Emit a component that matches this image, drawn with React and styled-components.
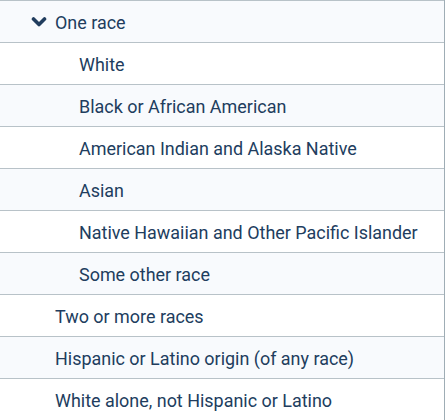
import React from 'react';
import styled, { createGlobalStyle } from 'styled-components';

const GlobalStyle = createGlobalStyle`
  body {
    margin: 0;
    background: #ffffff;
    font-family: Roboto, "Liberation Sans", sans-serif;
  }
`;

const List = styled.div`
  width: 445px;
  box-sizing: border-box;
  border-right: 1px solid #9fadb5;
`;

const Row = styled.div`
  display: flex;
  align-items: center;
  height: 42px;
  box-sizing: border-box;
  border-top: 1px solid #b8c2c8;
  padding-top: 1px;
  background: ${(p) => (p.$shade ? '#f8fafd' : '#ffffff')};
  padding-left: ${(p) => p.$indent}px;
  color: #213d5e;
  font-size: 17.95px;
  white-space: nowrap;
`;

const Chevron = styled.svg`
  width: 16px;
  height: 12px;
  margin-right: 8px;
  margin-left: -24px;
  margin-top: -1px;
`;

const rows = [
  { label: 'One race', indent: 55, open: true },
  { label: 'White', indent: 79 },
  { label: 'Black or African American', indent: 79 },
  { label: 'American Indian and Alaska Native', indent: 79 },
  { label: 'Asian', indent: 79 },
  { label: 'Native Hawaiian and Other Pacific Islander', indent: 79 },
  { label: 'Some other race', indent: 79 },
  { label: 'Two or more races', indent: 55 },
  { label: 'Hispanic or Latino origin (of any race)', indent: 55 },
  { label: 'White alone, not Hispanic or Latino', indent: 55 },
];

export default function App() {
  return (
    <>
      <GlobalStyle />
      <List>
        {rows.map((r, i) => (
          <Row key={r.label} $shade={i % 2 === 0} $indent={r.indent}>
            {r.open && (
              <Chevron viewBox="0 0 16 12">
                <path d="M2.5 3 L8 8.5 L13.5 3" fill="none" stroke="#213d5e" strokeWidth="3.6" strokeLinecap="round" strokeLinejoin="round" />
              </Chevron>
            )}
            {r.label}
          </Row>
        ))}
      </List>
    </>
  );
}
